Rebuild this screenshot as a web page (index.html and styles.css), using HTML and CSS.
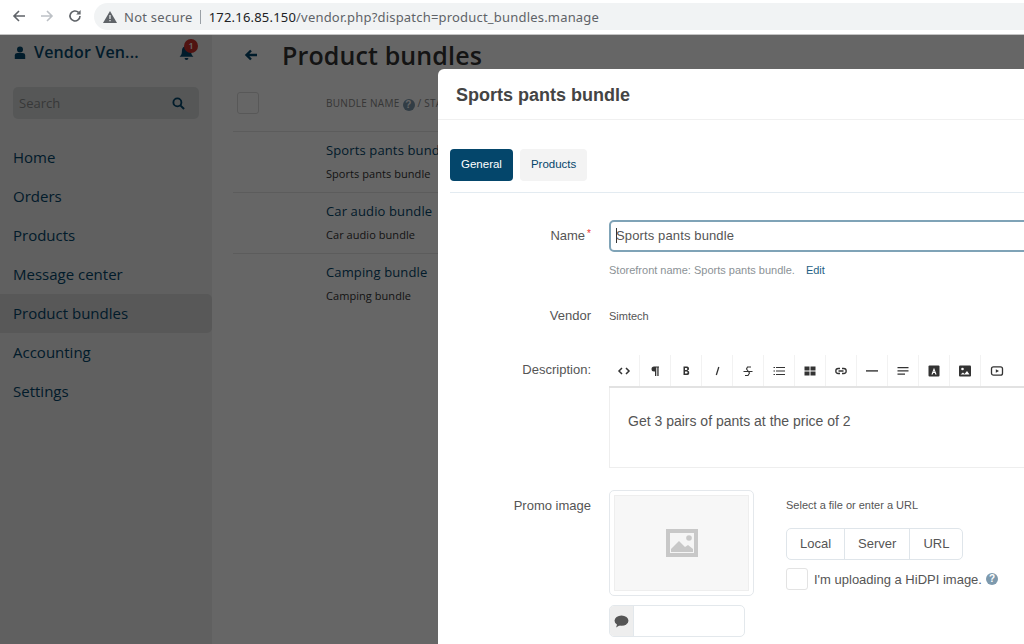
FILE: index.html
```html
<!DOCTYPE html>
<html lang="en">
<head>
<meta charset="utf-8">
<title>Product bundles</title>
<link rel="stylesheet" href="styles.css">
</head>
<body>
<header class="browser">
  <svg class="nav-icon" viewBox="0 0 16 16"><path d="M14 8H3M8 3 3 8l5 5" fill="none" stroke="#5f6368" stroke-width="1.6"/></svg>
  <svg class="nav-icon" viewBox="0 0 16 16"><path d="M2 8h11M8 3l5 5-5 5" fill="none" stroke="#bdc1c6" stroke-width="1.6"/></svg>
  <svg class="nav-icon" viewBox="0 0 16 16"><path d="M13 8a5 5 0 1 1-1.5-3.6" fill="none" stroke="#5f6368" stroke-width="1.6"/><path d="M13.6 2v4.4H9.200z" fill="#5f6368"/></svg>
  <div class="omnibox">
    <svg class="warn" viewBox="0 0 14 12"><path d="M7 0 14 12H0z" fill="#5f6368"/><path d="M6.400 4h1.200v4H6.400zM6.400 9h1.200v1.200H6.400z" fill="#f1f3f4"/></svg>
    <span class="not-secure">Not secure</span>
    <span class="sep"></span>
    <span class="url"><b>172.16.85.150</b>/vendor.php?dispatch=product_bundles.manage</span>
  </div>
</header>

<div class="app">
  <aside class="sidebar">
    <div class="vendor">
      <svg class="user" viewBox="0 0 12 13"><circle cx="6" cy="3.400" r="3" fill="#04466b"/><path d="M.8 13V9.500C.8 7.800 2 7 3.500 7h5c1.500 0 2.700.8 2.700 2.500V13z" fill="#04466b"/></svg>
      <span class="vendor-name">Vendor Ven...</span>
      <span class="bell">
        <svg viewBox="0 0 14 15"><path d="M7 1c3 0 4.300 2.200 4.300 5 0 2.600 1 3.700 2.200 5H.5c1.200-1.300 2.200-2.400 2.200-5C2.700 3.200 4 1 7 1zM5.200 12.200h3.600a1.800 1.800 0 0 1-3.600 0z" fill="#04466b"/></svg>
        <span class="badge">1</span>
      </span>
    </div>
    <div class="search">
      <span>Search</span>
      <svg viewBox="0 0 14 14"><circle cx="5.800" cy="5.800" r="4.300" fill="none" stroke="#04466b" stroke-width="2"/><path d="m9 9 4 4" stroke="#04466b" stroke-width="2.200"/></svg>
    </div>
    <nav class="menu">
      <a>Home</a>
      <a>Orders</a>
      <a>Products</a>
      <a>Message center</a>
      <a class="active">Product bundles</a>
      <a>Accounting</a>
      <a>Settings</a>
    </nav>
  </aside>

  <main class="content">
    <div class="title-row">
      <svg class="back" viewBox="0 0 14 12"><path d="M13 6H3M7 1.500 2.500 6 7 10.500" fill="none" stroke="#04466b" stroke-width="2.400"/></svg>
      <h1>Product bundles</h1>
    </div>
    <div class="thead">
      <span class="cb"></span>
      <span class="th">BUNDLE NAME <i class="q">?</i> / STATUS</span>
    </div>
    <div class="row"><a>Sports pants bundle</a><span>Sports pants bundle</span></div>
    <div class="row"><a>Car audio bundle</a><span>Car audio bundle</span></div>
    <div class="row"><a>Camping bundle</a><span>Camping bundle</span></div>
  </main>
</div>

<div class="backdrop"></div>

<section class="modal">
  <h2>Sports pants bundle</h2>
  <div class="modal-body">
    <div class="tabs">
      <span class="tab on">General</span>
      <span class="tab">Products</span>
    </div>

    <div class="field f-name">
      <label>Name<em>*</em></label>
      <div class="val">
        <div class="input"><span class="caret"></span>Sports pants bundle</div>
        <p class="hint">Storefront name: Sports pants bundle.<a>Edit</a></p>
      </div>
    </div>

    <div class="field f-vendor">
      <label>Vendor</label>
      <div class="val small">Simtech</div>
    </div>

    <div class="field f-desc">
      <label>Description:</label>
      <div class="val">
        <div class="toolbar">
          <span><svg viewBox="0 0 14 14"><path d="M5 4 2 7l3 3M9 4l3 3-3 3" fill="none" stroke="#333" stroke-width="1.500"/></svg></span>
          <span><svg viewBox="0 0 14 14"><path d="M11 2.500H6a2.500 2.500 0 0 0 0 5h1v4.500h1.300V3.600h1V12H10.600V3.600H11z" fill="#333"/></svg></span>
          <span><svg viewBox="0 0 14 14"><path d="M4.500 2.500h3a2 2 0 0 1 1 4 2.300 2.300 0 0 1-1 4.500h-3zM6 4v2h1.300a1 1 0 0 0 0-2zm0 3.400v2.200h1.500a1.100 1.100 0 0 0 0-2.200z" fill="#333"/></svg></span>
          <span><svg viewBox="0 0 14 14"><path d="M8.800 3 6.300 11" stroke="#333" stroke-width="1.300" fill="none"/></svg></span>
          <span><svg viewBox="0 0 14 14"><path d="M10 3H6.500L5.500 5 8.500 9 7 11.500H4M2.500 7.500h9" fill="none" stroke="#333" stroke-width="1.100"/></svg></span>
          <span><svg viewBox="0 0 14 14"><path d="M1.500 3h1.500v1H1.500zM4 3h9v1H4zM1.500 6.500h1.500v1H1.500zM4 6.500h9v1H4zM1.500 10h1.500v1H1.500zM4 10h9v1H4z" fill="#333"/></svg></span>
          <span><svg viewBox="0 0 14 14"><path d="M1.500 2.500h5v4h-5zM7.500 2.500h5v4h-5zM1.500 7.500h5v4h-5zM7.500 7.500h5v4h-5z" fill="#333"/></svg></span>
          <span><svg viewBox="0 0 14 14"><path d="M6 4.500H4.300a2.500 2.500 0 0 0 0 5H6M8 4.500h1.700a2.500 2.500 0 0 1 0 5H8M4.500 7h5" fill="none" stroke="#333" stroke-width="1.300"/></svg></span>
          <span><svg viewBox="0 0 14 14"><path d="M1 6.200h12v1.400H1z" fill="#333"/></svg></span>
          <span><svg viewBox="0 0 14 14"><path d="M1.500 3h11v1.200h-11zM1.500 6.300h11v1.200h-11zM1.500 9.600h7.500v1.200H1.500z" fill="#333"/></svg></span>
          <span><svg viewBox="0 0 14 14"><rect x="1.500" y="1.500" width="11" height="11" rx="1" fill="#333"/><path d="M7 3.800 9.600 10.500H8.300L7.800 9H6.200L5.700 10.500H4.400zM6.600 8h.8L7 6.600z" fill="#fff"/></svg></span>
          <span><svg viewBox="0 0 14 14"><rect x="1" y="1.500" width="12" height="11" rx="1" fill="#333"/><circle cx="4.500" cy="5" r="1.300" fill="#fff"/><path d="M2.500 10.500 5 8.500 6.500 10l2.500-3 2.500 3.500z" fill="#fff"/></svg></span>
          <span><svg viewBox="0 0 14 14"><rect x="1.500" y="2.800" width="11" height="8.400" rx="2" fill="none" stroke="#333" stroke-width="1.300"/><path d="M5.800 5.200 9 7 5.800 8.800z" fill="#333"/></svg></span>
        </div>
        <div class="editor">Get 3 pairs of pants at the price of 2</div>
      </div>
    </div>

    <div class="field f-promo">
      <label>Promo image</label>
      <div class="val promo">
        <div class="image-col">
          <div class="thumb">
            <div class="thumb-in">
              <svg viewBox="0 0 32 28"><rect width="32" height="28" fill="#c8c8c8"/><rect x="4" y="4" width="24" height="20" fill="#f5f5f5"/><circle cx="23" cy="9" r="2.800" fill="#c8c8c8"/><path d="M5 23v-3l8-8 6 6 3-2 5 4v3z" fill="#c8c8c8"/></svg>
            </div>
          </div>
          <div class="alt">
            <span class="alt-icon"><svg viewBox="0 0 14 12"><ellipse cx="7" cy="5.200" rx="6.500" ry="4.800" fill="#555"/><path d="M3 8 2 11.500 6 9z" fill="#555"/></svg></span>
          </div>
        </div>
        <div class="upload">
          <p>Select a file or enter a URL</p>
          <div class="btns"><span>Local</span><span>Server</span><span>URL</span></div>
          <div class="hidpi"><span class="cb2"></span>I'm uploading a HiDPI image.<i class="q2">?</i></div>
        </div>
      </div>
    </div>
  </div>
</section>
</body>
</html>
```
FILE: styles.css
```css
* { box-sizing: border-box; }
html, body { margin: 0; height: 100%; overflow: hidden; }
body { width: 1024px; height: 644px; position: relative; background: #fff; font-family: "Open Sans", "Noto Sans", sans-serif; color: #333; }

.browser { height: 35px; padding: 3px 0 0 11px; display: flex; align-items: flex-start; background: #fff; position: relative; z-index: 3; border-bottom: 1px solid #c4c4c4; }
.nav-icon { width: 16px; height: 16px; margin: 5px 12px 0 0; flex: none; }
.nav-icon:nth-child(3) { margin-right: 11px; }
.omnibox { flex: 1; height: 27px; background: #f1f3f4; border-radius: 14px 0 0 14px; display: flex; align-items: center; padding-left: 9px; font-family: "Noto Sans", sans-serif; font-size: 13px; color: #5f6368; white-space: nowrap; }
.warn { width: 14px; height: 12px; margin-right: 7px; }
.not-secure { letter-spacing: .02em; }
.sep { width: 1px; height: 14px; background: #9aa0a6; margin: 0 8px 0 7px; }
.url { letter-spacing: .015em; }
.url b { font-weight: 400; color: #202124; }

.app { display: flex; height: 609px; }
.sidebar { width: 212px; flex: none; background: #eff0f0; padding-top: 5px; }
.vendor { display: flex; align-items: center; height: 24px; padding-left: 14px; position: relative; }
.user { width: 12px; height: 13px; margin-right: 8px; }
.vendor-name { font-size: 16px; font-weight: 600; color: #04466b; letter-spacing: .01em; }
.bell { position: absolute; left: 179px; top: 5px; width: 15px; height: 16px; }
.bell svg { width: 15px; height: 16px; display: block; }
.badge { position: absolute; left: 5px; top: -6px; width: 14px; height: 14px; border-radius: 50%; background: #c9302c; color: #fff; font-size: 9px; font-weight: 600; line-height: 14px; text-align: center; }
.search { margin: 23px 13px 0; height: 32px; border-radius: 5px; background: #d8dada; display: flex; align-items: center; justify-content: space-between; padding: 0 14px 0 6px; font-size: 13px; color: #8b8d8e; }
.search svg { width: 13px; height: 13px; }
.menu { margin-top: 19px; display: flex; flex-direction: column; }
.menu a { height: 39px; line-height: 38px; padding-left: 13px; font-size: 15px; color: #04466b; border-radius: 0 5px 5px 0; }
.menu a.active { background: #dcdcdc; }

.content { flex: 1; background: #fff; padding: 0 0 0 21px; min-width: 0; }
.title-row { display: flex; align-items: center; height: 40px; }
.back { width: 14px; height: 12px; margin: 0 24px 0 11px; }
h1 { margin: 0; font-size: 25px; font-weight: 600; color: #333; letter-spacing: .005em; }
.thead { height: 57px; display: flex; align-items: center; border-bottom: 1px solid #e6e6e6; padding: 0 0 0 4px; }
.cb { width: 22px; height: 22px; border: 1px solid #ddd; border-radius: 3px; margin-right: 67px; }
.th { font-size: 10px; color: #888; letter-spacing: .03em; white-space: nowrap; }
.q { display: inline-block; width: 12px; height: 12px; border-radius: 50%; background: #7d99ad; color: #fff; font: 700 10px/12px "Liberation Sans", sans-serif; text-align: center; vertical-align: -1px; }
.row { height: 61px; border-bottom: 1px solid #e6e6e6; padding: 8px 0 0 93px; display: flex; flex-direction: column; white-space: nowrap; }
.row:last-child { border-bottom: 0; }
.row a { font-size: 13px; color: #04466b; line-height: 20px; letter-spacing: .01em; }
.row span { font-size: 11px; color: #333; line-height: 20px; margin-top: 4px; letter-spacing: .005em; }

.backdrop { position: absolute; inset: 35px 0 0 0; background: rgba(0,0,0,.6); z-index: 1; }

.modal { position: absolute; left: 438px; top: 69px; width: 600px; height: 590px; background: #fff; border-radius: 6px 0 0 0; z-index: 2; font-family: "Liberation Sans", Arial, sans-serif; color: #555; }
h2 { margin: 0; height: 51px; padding: 16px 0 0 18px; font-size: 18px; line-height: 20px; font-weight: 700; color: #444; border-bottom: 1px solid #f0f0f0; }
.modal-body { padding: 29px 0 0 12px; }
.tabs { display: flex; gap: 7px; height: 44px; border-bottom: 1px solid #e3ebf1; }
.tab { height: 32px; padding: 0 11px; line-height: 31px; font-size: 11.500px; border-radius: 4px; background: #f3f3f3; color: #04466b; }
.tab.on { background: #04466b; color: #fff; }

.field { display: flex; }
.field > label { width: 141px; flex: none; text-align: right; font-size: 13px; color: #555; }
.field > label em { color: #e33; font-style: normal; font-size: 10px; vertical-align: 3px; margin-left: 2px; }
.val { margin-left: 18px; flex: 1; min-width: 0; }
.f-name { margin-top: 27px; }
.f-name > label { padding-top: 8px; padding-right: 0; position: relative; }
.input { height: 32px; width: 460px; border: 2px solid #7fa3b7; border-radius: 5px; line-height: 28px; padding-left: 5px; font-size: 13px; color: #555; position: relative; letter-spacing: .01em; }
.caret { display: inline-block; width: 1px; height: 15px; background: #333; vertical-align: -3px; margin-right: -1px; }
.hint { margin: 12px 0 0; font-size: 11px; line-height: 13px; color: #8b9296; white-space: nowrap; }
.hint a { color: #1f5f85; margin-left: 11px; }
.f-vendor { margin-top: 31px; }
.f-vendor > label { line-height: 15px; }
.small { font-size: 11px; line-height: 15px; padding-top: 1px; }
.f-desc { margin-top: 31px; }
.f-desc > label { padding-top: 7px; line-height: 15px; }
.toolbar { display: flex; height: 33px; width: 460px; border-bottom: 2px solid #e2e2e2; background: #fff; }
.toolbar span { width: 31px; flex: none; height: 31px; display: flex; align-items: center; justify-content: center; border-right: 1px solid #f2f2f2; }
.toolbar span:last-child { border-right: 0; }
.toolbar svg { width: 14px; height: 14px; display: block; }
.editor { height: 80px; width: 460px; border-left: 1px solid #eee; border-bottom: 1px solid #eee; padding: 24px 0 0 18px; font-size: 14px; line-height: 18px; color: #555; }
.f-promo { margin-top: 22px; }
.f-promo > label { padding-top: 8px; line-height: 15px; }
.promo { display: flex; }
.image-col { width: 145px; flex: none; }
.thumb { width: 145px; height: 106px; border: 1px solid #e4e8ec; border-radius: 5px; padding: 4px; }
.thumb-in { height: 96px; background: #f7f7f7; border: 1px solid #eee; display: flex; align-items: center; justify-content: center; }
.thumb-in svg { width: 32px; height: 28px; }
.alt { margin-top: 9px; width: 136px; height: 32px; border: 1px solid #e3e8ec; border-radius: 5px; overflow: hidden; }
.alt-icon { display: flex; align-items: center; justify-content: center; width: 24px; height: 100%; background: #eee; border-right: 1px solid #e3e8ec; }
.alt-icon svg { width: 15px; height: 13px; }
.upload { margin-left: 32px; }
.upload p { margin: 8px 0 0; font-size: 11px; line-height: 15px; color: #555; }
.btns { display: inline-flex; margin-top: 15px; height: 32px; border: 1px solid #dfe5ea; border-radius: 5px; font-size: 13px; line-height: 30px; color: #555; }
.btns span { padding: 0 13px; border-right: 1px solid #dfe5ea; }
.btns span:last-child { border-right: 0; }
.hidpi { display: flex; align-items: center; margin-top: 8px; font-size: 13px; color: #555; height: 22px; white-space: nowrap; }
.cb2 { width: 22px; height: 22px; border: 1px solid #e3e3e3; border-radius: 3px; margin-right: 6px; }
.q2 { width: 12px; height: 12px; border-radius: 50%; background: #7d99ad; color: #fff; font: 700 10px/12px "Liberation Sans", sans-serif; text-align: center; margin-left: 4px; }
```
